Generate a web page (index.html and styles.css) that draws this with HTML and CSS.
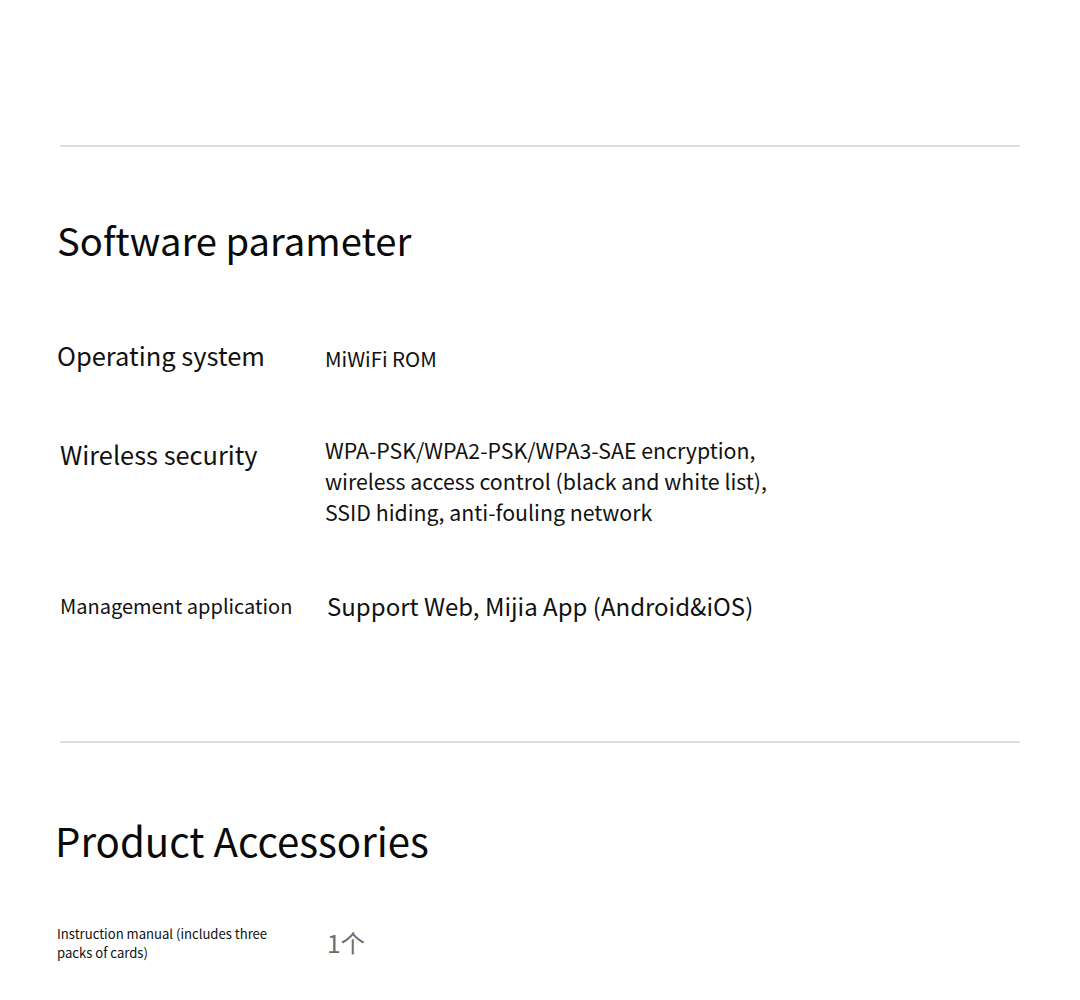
FILE: index.html
```html
<!DOCTYPE html>
<html lang="en">
<head>
<meta charset="utf-8">
<link rel="stylesheet" href="styles.css">
</head>
<body>
<div class="page">
  <hr class="rule rule-top">
  <section class="section">
    <h2 class="title title-software">Software parameter</h2>
    <div class="row row-os">
      <div class="label label-os">Operating system</div>
      <div class="value value-os">MiWiFi ROM</div>
    </div>
    <div class="row row-sec">
      <div class="label label-sec">Wireless security</div>
      <div class="value value-sec">WPA-PSK/WPA2-PSK/WPA3-SAE encryption,<br>wireless access control (black and white list),<br>SSID hiding, anti-fouling network</div>
    </div>
    <div class="row row-mgmt">
      <div class="label label-mgmt">Management application</div>
      <div class="value value-mgmt">Support Web, Mijia App (Android&amp;iOS)</div>
    </div>
  </section>
  <hr class="rule rule-mid">
  <section class="section">
    <h2 class="title title-acc">Product Accessories</h2>
    <div class="row row-acc">
      <div class="label label-acc">Instruction manual (includes three packs of cards)</div>
      <div class="value value-acc">1个</div>
    </div>
  </section>
</div>
</body>
</html>
```

FILE: styles.css
```css
* { box-sizing: border-box; }
html, body { margin: 0; padding: 0; background: #fff; }
body {
  font-family: "Noto Sans CJK SC", "Noto Sans", sans-serif;
  color: #111;
}
.page {
  padding: 145px 60px 0 60px;
}
.rule {
  border: 0;
  border-top: 2px solid #dedede;
  margin: 0;
  width: 960px;
}
.title {
  font-weight: 400;
  margin: 0;
  color: #0a0a0a;
  line-height: 1;
}
.title-software {
  font-size: 38.2px;
  margin: 74px 0 0 -3px;
}
.title-acc {
  font-size: 40.2px;
  margin: 77px 0 0 -5px;
}
.row {
  display: flex;
  align-items: flex-start;
}
.label { width: 265px; flex: none; }
.value { flex: 1; }
.row-os { margin-top: 80px; }
.label-os { font-size: 25.5px; margin-left: -3px; line-height: 32px; }
.value-os { font-size: 20.4px; line-height: 32px; padding-top: 3px; margin-left: 3px; }
.row-sec { margin-top: 60px; }
.label-sec { font-size: 25.4px; line-height: 32px; padding-top: 4px; }
.value-sec { font-size: 21.3px; line-height: 31px; }
.row-mgmt { margin-top: 63px; }
.label-mgmt { font-size: 20px; line-height: 32px; }
.value-mgmt { font-size: 24px; line-height: 32px; margin-left: 2px; }
.rule-mid { margin-top: 119px; }
.row-acc { margin-top: 64px; }
.label-acc { font-size: 13.1px; line-height: 19px; margin-left: -3px; width: 220px; margin-right: 50px; }
.value-acc { font-size: 24.5px; color: #6b6b6b; line-height: 32px; margin-top: 3px; }
```
